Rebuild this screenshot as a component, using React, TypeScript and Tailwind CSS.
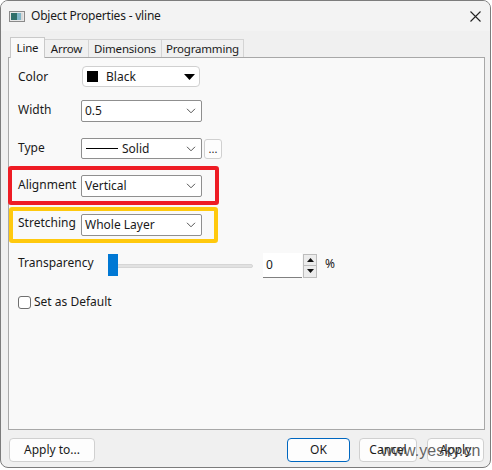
import React from "react";

const Chevron = () => (
  <svg width="10" height="6" viewBox="0 0 10 6" className="shrink-0">
    <path d="M1 0.8 L5 4.8 L9 0.8" fill="none" stroke="#555" strokeWidth="1" />
  </svg>
);

const Combo = ({ children, w = "w-[121px]", h = "h-[22px]" }: { children: React.ReactNode; w?: string; h?: string }) => (
  <div className={`${w} ${h} flex items-center justify-between bg-white border border-[#8f8f8f] rounded-[2px] pl-[3px] pr-[5px]`}>
    <div className="flex items-center">{children}</div>
    <Chevron />
  </div>
);

export default function App() {
  return (
    <div className="w-[492px] h-[470px] bg-white font-['Segoe_UI','Noto_Sans',sans-serif] text-[12px] text-[#1a1a1a]">
      <div className="relative w-[491px] h-[468px] border border-[#7c7c7c] rounded-[8px] overflow-hidden bg-[#f0f0f0] flex flex-col">
        {/* Title bar */}
        <div className="h-[30px] shrink-0 bg-[#f3f3f3] flex items-center pl-[8px] pr-[9px]">
          <svg width="16" height="11" viewBox="0 0 16 11" className="shrink-0">
            <rect x="0.5" y="0.5" width="15" height="10" fill="#e8e8e8" stroke="#8a8a8a" />
            <rect x="2" y="2" width="6" height="7" fill="#2f6f6a" />
            <rect x="8" y="2" width="4" height="7" fill="#7fb6c8" />
            <rect x="12" y="2" width="2" height="7" fill="#d8d8d8" />
          </svg>
          <span className="ml-[6px] text-[12px] tracking-[-0.2px] text-[#1a1a1a]">Object Properties - vline</span>
          <div className="flex-1" />
          <svg width="11" height="11" viewBox="0 0 11 11">
            <path d="M0.5 0.5 L10.5 10.5 M10.5 0.5 L0.5 10.5" stroke="#222" strokeWidth="1.1" />
          </svg>
        </div>

        {/* Body */}
        <div className="flex-1 flex flex-col pl-[7px] pt-[6px]">
          {/* Tabs */}
          <div className="flex items-end h-[20px] relative z-10 pl-[2px] text-[11.5px] tracking-[-0.2px]">
            <div className="w-[35px] h-[21px] flex items-center justify-center bg-[#f9f9f9] border border-b-0 border-[#c9c9c9] -mb-[1px]">Line</div>
            <div className="w-[44px] h-[18px] flex items-center justify-center border border-l-0 border-b-0 border-[#d4d4d4]">Arrow</div>
            <div className="w-[73px] h-[18px] flex items-center justify-center border border-l-0 border-b-0 border-[#d4d4d4]">Dimensions</div>
            <div className="w-[82px] h-[18px] flex items-center justify-center border border-l-0 border-b-0 border-[#d4d4d4]">Programming</div>
          </div>

          {/* Panel */}
          <div className="w-[477px] h-[373px] bg-[#f9f9f9] border border-[#a8a8a8] flex flex-col pl-[9px] pt-[8px]">
            {/* Color */}
            <div className="flex items-center h-[21px]">
              <div className="w-[64px]">Color</div>
              <div className="w-[118px] h-[21px] flex items-center justify-between bg-white border border-[#d0d0d0] rounded-[4px] pl-[4px] pr-[4px]">
                <div className="flex items-center">
                  <div className="w-[11px] h-[11px] bg-black" />
                  <span className="ml-[8px]">Black</span>
                </div>
                <svg width="11" height="6" viewBox="0 0 11 6"><path d="M0 0 H11 L5.5 6 Z" fill="#000" /></svg>
              </div>
            </div>
            {/* Width */}
            <div className="flex items-center h-[22px] mt-[13px]">
              <div className="w-[63px] -mt-[3px]">Width</div>
              <Combo>0.5</Combo>
            </div>
            {/* Type */}
            <div className="flex items-center h-[21px] mt-[16px]">
              <div className="w-[63px] -mt-[1px]">Type</div>
              <Combo h="h-[21px]">
                <div className="w-[32px] h-[1px] bg-black ml-[1px]" />
                <span className="ml-[4px]">Solid</span>
              </Combo>
              <div className="ml-[2px] w-[18px] h-[20px] bg-[#fdfdfd] border border-[#d0d0d0] rounded-[3px] flex items-end justify-center pb-[4px] leading-none text-[11px]">...</div>
            </div>
            {/* Alignment (red) */}
            <div className="-ml-[10px] mt-[7px] w-[211px] h-[39px] border-[4px] border-[#ee1c24] rounded-[3px] flex items-center pl-[6px]">
              <div className="w-[63px] -mt-[1px]">Alignment</div>
              <Combo>Vertical</Combo>
            </div>
            {/* Stretching (yellow) */}
            <div className="-ml-[9px] mt-[2px] w-[209px] h-[36px] border-[4px] border-[#ffc90e] rounded-[3px] flex items-center pl-[5px]">
              <div className="w-[63px] -mt-[4px]">Stretching</div>
              <Combo>Whole Layer</Combo>
            </div>
            {/* Transparency */}
            <div className="flex items-center h-[25px] mt-[10px]">
              <div className="w-[90px] -mt-[5px]">Transparency</div>
              <div className="relative w-[145px] h-[22px] -mt-[2px]">
                <div className="absolute left-[4px] right-0 top-[10px] h-[4px] bg-[#e2e2e2] border border-[#d6d6d6] rounded-[2px]" />
                <div className="absolute left-0 top-0 w-[10px] h-[22px] bg-[#0078d4]" />
              </div>
              <div className="ml-[10px] w-[39px] h-[25px] bg-white border-b border-[#808080] flex items-center pl-[3px] text-[#1a1a1a]">0</div>
              <div className="ml-[1px] w-[14px] h-[24px] flex flex-col">
                <div className="h-[12px] bg-[#ececec] border border-[#bdbdbd] flex items-center justify-center">
                  <svg width="7" height="4" viewBox="0 0 7 4"><path d="M0 4 L3.5 0 L7 4 Z" fill="#111" /></svg>
                </div>
                <div className="h-[12px] bg-[#ececec] border border-t-0 border-[#bdbdbd] flex items-center justify-center">
                  <svg width="7" height="4" viewBox="0 0 7 4"><path d="M0 0 L7 0 L3.5 4 Z" fill="#111" /></svg>
                </div>
              </div>
              <div className="ml-[8px] -mt-[3px]">%</div>
            </div>
            {/* Checkbox */}
            <div className="flex items-center h-[14px] mt-[17px]">
              <div className="w-[13px] h-[13px] bg-white border border-[#6f6f6f] rounded-[3px]" />
              <span className="ml-[3px]">Set as Default</span>
            </div>
          </div>

          {/* Buttons */}
          <div className="flex items-center mt-[8px] pl-[1px] h-[24px]">
            <div className="w-[86px] h-[24px] bg-[#fdfdfd] border border-[#d0d0d0] rounded-[4px] flex items-center justify-center">Apply to...</div>
            <div className="flex-1" />
            <div className="w-[63px] h-[24px] bg-[#fdfdfd] border border-[#0067c0] rounded-[4px] flex items-center justify-center">OK</div>
            <div className="ml-[9px] w-[58px] h-[24px] bg-[#fdfdfd] border border-[#d0d0d0] rounded-[4px] flex items-center justify-center">Cancel</div>
            <div className="ml-[10px] w-[57px] h-[24px] bg-[#fdfdfd] border border-[#d0d0d0] rounded-[4px] flex items-center justify-center">Apply</div>
            <div className="w-[6px]" />
          </div>
        </div>

        {/* watermark */}
        <div className="absolute left-[380px] top-[442px] text-[16px] leading-none text-[#3a3a3a]/80 font-['Liberation_Sans',sans-serif]">www.yesky.cn</div>
      </div>
    </div>
  );
}
